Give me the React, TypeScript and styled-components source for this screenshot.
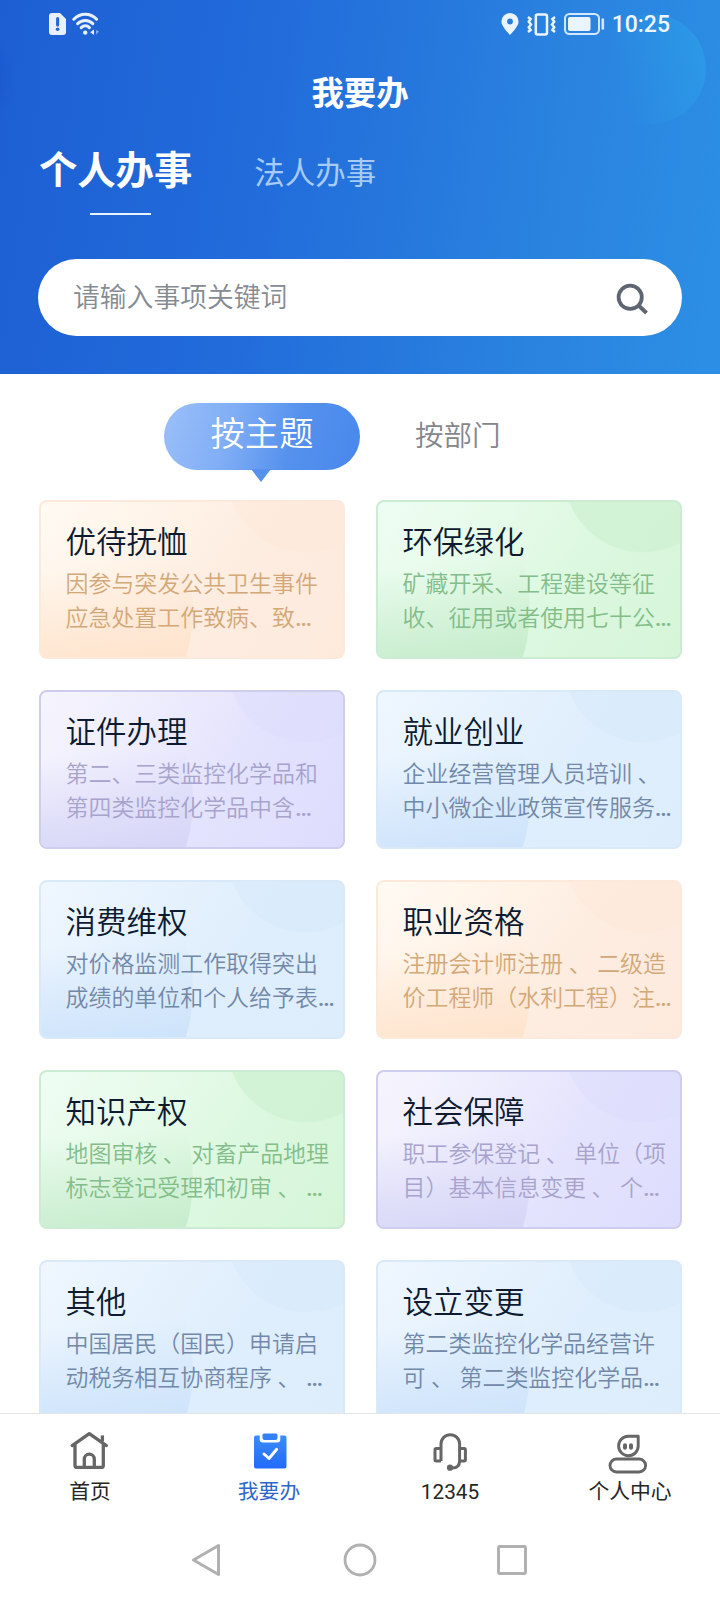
import React from 'react';
import styled, { createGlobalStyle, css } from 'styled-components';

const GlobalStyle = createGlobalStyle`
  * { box-sizing: border-box; }
  body {
    margin: 0;
    background: #fff;
    font-family: Roboto, "Noto Sans CJK SC", sans-serif;
  }
  svg { display: block; }
`;

type Tone = 'orange' | 'green' | 'purple' | 'blue';

interface Palette {
  text: string;
  border: string;
  base: string;
  circle: string;
  corner: string;
}

const palettes: Record<Tone, Palette> = {
  orange: {
    text: '#d3a878',
    border: '#fce9dc',
    base: 'linear-gradient(125deg, #fffaf3 0%, #fff4e9 30%, #fdece0 60%, #fdeadd 100%)',
    circle: '253, 231, 216',
    corner: '254, 227, 203',
  },
  green: {
    text: '#83bd8a',
    border: '#cbecd2',
    base: 'linear-gradient(125deg, #eefdf3 0%, #e7fbea 30%, #dcf8e0 60%, #d6f5d8 100%)',
    circle: '206, 241, 210',
    corner: '196, 235, 202',
  },
  purple: {
    text: '#a8a3cd',
    border: '#cfcdee',
    base: 'linear-gradient(120deg, #f6f5fd 0%, #eeedfd 30%, #e4e3fd 60%, #dddcfd 100%)',
    circle: '217, 219, 252',
    corner: '213, 212, 246',
  },
  blue: {
    text: '#7288a8',
    border: '#d9e9f8',
    base: 'linear-gradient(125deg, #eff7fe 0%, #e6f2fd 30%, #dfeefc 60%, #deedfb 100%)',
    circle: '210, 230, 249',
    corner: '204, 226, 251',
  },
};

const Screen = styled.div`
  width: 720px;
  height: 1600px;
  display: flex;
  flex-direction: column;
  overflow: hidden;
  background: #fff;
`;

const Header = styled.header`
  height: 374px;
  flex: none;
  display: flex;
  flex-direction: column;
  color: #fff;
  background:
    radial-gradient(circle 60px at -46px 78px, rgba(24, 78, 205, 0.6) 60%, rgba(24, 78, 205, 0) 100%),
    linear-gradient(98deg, #1d5fd2 0%, #216bdb 35%, #2575dc 52%, #2a83df 75%, #2c8fe5 100%);
  position: relative;

  &::before {
    content: '';
    position: absolute;
    left: 596px;
    top: 14px;
    width: 110px;
    height: 110px;
    border-radius: 50%;
    background: linear-gradient(75deg, rgba(44, 162, 232, 0) 25%, rgba(44, 162, 232, 0.65) 100%);
  }
`;

const StatusBar = styled.div`
  height: 48px;
  padding: 0 50px 0 49px;
  display: flex;
  align-items: center;
  justify-content: space-between;
  position: relative;
`;

const StatusGroup = styled.div<{ $gap: number }>`
  display: flex;
  align-items: center;
  gap: ${(p) => p.$gap}px;
`;

const Clock = styled.span`
  font-size: 23px;
  font-weight: 500;
  line-height: 28px;
  padding-top: 2px;
  margin-left: -1px;
  color: #eef6ff;
`;

const Title = styled.h1`
  margin: 0;
  height: 84px;
  font-size: 32.4px;
  line-height: 92px;
  font-weight: 700;
  text-align: center;
`;

const AudienceTabs = styled.div`
  height: 127px;
  padding: 3px 0 0 39px;
  display: flex;
  align-items: flex-start;
  gap: 62px;
`;

const AudienceTab = styled.div<{ $active?: boolean }>`
  display: flex;
  flex-direction: column;
  align-items: center;
  white-space: nowrap;
  font-size: 30.5px;
  line-height: 78px;
  color: #a5cbf6;
  ${(p) =>
    p.$active &&
    css`
      font-size: 38.3px;
      line-height: 72px;
      font-weight: 700;
      color: #fff;
      &::after {
        content: '';
        width: 61px;
        height: 2px;
        margin: 6px 0 0 9px;
        background: #e8f3ff;
      }
    `}
`;

const SearchBox = styled.div`
  margin: 0 38px;
  height: 77px;
  border-radius: 39px;
  padding: 3px 33px 0 35px;
  background: #fff;
  display: flex;
  align-items: center;
  justify-content: space-between;
`;

const Placeholder = styled.span`
  font-size: 26.8px;
  font-weight: 350;
  line-height: 40px;
  color: #858a93;
  margin-top: -3px;
`;

const Content = styled.main`
  flex: 1;
  min-height: 0;
  overflow: hidden;
`;

const ModeTabs = styled.div`
  height: 126px;
  padding: 29px 0 0 164px;
  display: flex;
  align-items: flex-start;
`;

const ModeActive = styled.div`
  position: relative;
  width: 196px;
  height: 67px;
  border-radius: 34px;
  font-size: 34.3px;
  font-weight: 350;
  line-height: 62px;
  text-align: center;
  color: #fff;
  background: linear-gradient(105deg, #97bdf9 5%, #7fadf5 35%, #5591ed 65%, #4888ec 100%);

  &::after {
    content: '';
    position: absolute;
    left: 87px;
    top: 66px;
    border: 10px solid transparent;
    border-top: 13px solid #5591ed;
    border-bottom: 0;
  }
`;

const ModeIdle = styled.div`
  margin-left: 55px;
  font-size: 28.5px;
  font-weight: 350;
  line-height: 67px;
  color: #85868c;
`;

const CardGrid = styled.div`
  padding: 0 38px 0 39px;
  display: grid;
  grid-template-columns: 306px 306px;
  grid-auto-rows: 159px;
  gap: 31px;
`;

const Card = styled.article<{ $tone: Tone }>`
  border: 2px solid ${(p) => palettes[p.$tone].border};
  border-radius: 8px;
  padding: 20px 0 0 24.5px;
  white-space: nowrap;
  color: ${(p) => palettes[p.$tone].text};
  background:
    ${(p) => {
      const { circle, base } = palettes[p.$tone];
      const strength = p.$tone === 'green' ? 0.75 : 0.38;
      return `
        radial-gradient(circle 80px at 267px -27px, rgba(${circle}, ${strength}) 0%, rgba(${circle}, ${strength}) 98%, rgba(${circle}, 0) 100%),
        ${base}`;
    }};
  background-origin: border-box;
  position: relative;
  overflow: hidden;

  &::before {
    content: '';
    position: absolute;
    left: -172px;
    top: -52px;
    width: 324px;
    height: 320px;
    border-radius: 50%;
    background: linear-gradient(
      176deg,
      rgba(${(p) => palettes[p.$tone].corner}, 0) 38%,
      rgba(${(p) => palettes[p.$tone].corner}, 0.85) 66%
    );
  }
`;

const CardTitle = styled.h2`
  position: relative;
  margin: 0;
  font-size: 30.5px;
  line-height: 42px;
  font-weight: 350;
  color: #0d1a30;
`;

const CardText = styled.p`
  position: relative;
  margin: 4px 0 0;
  font-size: 22.95px;
  font-weight: 350;
  line-height: 34px;
`;

const Ellipsis = styled.span`
  font-weight: 500;
  font-size: 24px;
  line-height: 1;
`;

const TabBar = styled.nav`
  height: 107px;
  flex: none;
  border-top: 1px solid #e3e5e8;
  background: #fff;
  display: grid;
  grid-template-columns: repeat(4, 180px);
`;

const TabItem = styled.div<{ $active?: boolean }>`
  display: flex;
  flex-direction: column;
  align-items: center;
  padding: 16px ${(p) => (p.$active ? 2 : 0)}px 0 0;
  font-size: 20.8px;
  line-height: 30px;
  color: ${(p) => (p.$active ? '#2e66c9' : '#262626')};

  svg {
    margin-bottom: 5px;
    overflow: visible;
  }
`;

const SystemNav = styled.div`
  height: 80px;
  flex: none;
  padding-left: 191px;
  display: flex;
  align-items: center;
`;

const SystemButton = styled.div<{ $gap: number }>`
  margin-right: ${(p) => p.$gap}px;
`;

const SimAlert = () => (
  <svg width="17" height="22" viewBox="0 0 17 22">
    <path d="M3 0H11L17 6V19a3 3 0 0 1-3 3H3a3 3 0 0 1-3-3V3a3 3 0 0 1 3-3Z" fill="#e9f1ff" />
    <path d="M8.6 5.5V12" stroke="#2166d6" strokeWidth="3" strokeLinecap="round" />
    <circle cx="8.6" cy="16.3" r="1.8" fill="#2166d6" />
  </svg>
);

const Wifi = () => (
  <svg width="28" height="24" viewBox="0 0 28 24" fill="none" stroke="#e9f1ff" strokeWidth="3" strokeLinecap="round">
    <path d="M1.8 7.2C8.5.6 18 .6 24.6 7.2" />
    <path d="M5.6 11.6c4.4-4.3 11-4.3 15.2 0" />
    <path d="M9.2 15.6c2.6-2.5 5.8-2.5 8.2 0" />
    <circle cx="13.2" cy="20.6" r="2.2" fill="#e9f1ff" stroke="none" />
    <path d="M22 17.5v5.600L18.200 20.300Z" fill="#e9f1ff" stroke="none" />
    <path d="M24.200 18v4.600l2.600-3Z" fill="#8eb7f0" stroke="none" />
  </svg>
);

const Pin = () => (
  <svg width="18" height="22" viewBox="0 0 18 22">
    <path
      fillRule="evenodd"
      fill="#eaf4ff"
      d="M9 0a8.6 8.6 0 0 1 8.6 8.6C17.600 14 9 22 9 22S.4 14 .4 8.600A8.600 8.600 0 0 1 9 0Zm0 5.600a2.900 2.900 0 1 0 0 5.800 2.900 2.900 0 0 0 0-5.800Z"
    />
  </svg>
);

const Vibrate = () => (
  <svg width="29" height="23" viewBox="0 0 29 23" fill="none" stroke="#eaf4ff">
    <rect x="8.800" y="1.400" width="11.200" height="20" rx="2" strokeWidth="2.500" />
    <path d="M1 4 3.600 6 1.800 8.700 4 11.500 1.800 14.300 3.600 17 1 19" strokeWidth="2.500" />
    <path d="M28 4 25.400 6l1.800 2.700L25 11.500l2.200 2.800L25.400 17l2.600 2" strokeWidth="2.500" />
  </svg>
);

const Battery = () => (
  <svg width="41" height="22" viewBox="0 0 41 22">
    <rect x="1" y="1" width="34" height="20" rx="4.500" fill="none" stroke="#d3e8ff" strokeWidth="2" />
    <rect x="4" y="4" width="22.500" height="14" rx="2" fill="#eaf4ff" />
    <path d="M38.800 6.500v9" stroke="#d3e8ff" strokeWidth="2.600" strokeLinecap="round" />
  </svg>
);

const SearchIcon = () => (
  <svg width="34" height="34" viewBox="0 0 34 34" fill="none" stroke="#5f6672" strokeWidth="3.800">
    <circle cx="15.200" cy="15.300" r="11.600" />
    <path d="M23.300 23.300 31.500 31" strokeWidth="4" />
  </svg>
);

const HomeIcon = () => (
  <svg width="42" height="42" viewBox="0 0 42 42" fill="none" stroke="#666" strokeWidth="3.300" strokeLinejoin="round" strokeLinecap="round">
    <path d="M3.200 15.600 20.300 3.600 37.400 15.600" />
    <path d="M33.400 11.500V5.400" strokeLinecap="butt" />
    <path d="M6 15v20.400q0 2 2 2h24.300q2 0 2-2V15" />
    <path d="M15.300 37V29.200a5 5 0 0 1 10 0V37" />
  </svg>
);

const TaskIcon = () => (
  <svg width="42" height="42" viewBox="0 0 42 42">
    <defs>
      <linearGradient id="task" x1="0" y1="0" x2="0" y2="1">
        <stop offset="0" stopColor="#3b8cfb" />
        <stop offset="1" stopColor="#226afa" />
      </linearGradient>
    </defs>
    <path d="M8 5.500h3.700v4q0 3 3 3h14.600q3 0 3-3v-4H36.500q2 0 2 2V36.500q0 2-2 2H8q-2 0-2-2V7.500q0-2 2-2Z" fill="url(#task)" />
    <path d="M16 3.500h12q1.500 0 1.500 1.500V8q0 2-2 2H16.500q-2 0-2-2V5q0-1.500 1.500-1.500Z" fill="#3380f4" />
    <path d="m16 24 5 4.500 7.700-9.200" fill="none" stroke="#fff" strokeWidth="2.900" strokeLinecap="round" strokeLinejoin="round" />
  </svg>
);

const HeadsetIcon = () => (
  <svg width="42" height="42" viewBox="0 0 42 42" fill="none" stroke="#666" strokeWidth="3" strokeLinejoin="round">
    <path d="M12 31V14a9.300 9.300 0 0 1 18.600 0V31c0 4.500-2.500 7-7.500 7" />
    <path d="M12 18.500H7.200q-1.200 0-1.200 1.200v10.100q0 1.200 1.200 1.200H12" />
    <path d="M30.600 18.500H35.200q1.200 0 1.200 1.200v10.100q0 1.200-1.200 1.200h-4.600" />
    <circle cx="21" cy="37.700" r="3.100" fill="#666" stroke="none" />
  </svg>
);

const ProfileIcon = () => (
  <svg width="42" height="42" viewBox="0 0 42 42" fill="none" stroke="#666" strokeWidth="2.900">
    <path d="M29.200 6.200H19a9.800 9.800 0 1 0 10.200 9.800Z" strokeLinejoin="round" />
    <path d="M16 15.200v2.600M22 15.200v2.600" strokeWidth="4" strokeLinecap="round" />
    <rect x="1" y="29" width="35.600" height="13" rx="6.500" />
  </svg>
);

const services: { title: string; tone: Tone; lines: [string, string]; cut?: boolean }[] = [
  { title: '优待抚恤', tone: 'orange', cut: true, lines: ['因参与突发公共卫生事件', '应急处置工作致病、致'] },
  { title: '环保绿化', tone: 'green', cut: true, lines: ['矿藏开采、工程建设等征', '收、征用或者使用七十公'] },
  { title: '证件办理', tone: 'purple', cut: true, lines: ['第二、三类监控化学品和', '第四类监控化学品中含'] },
  { title: '就业创业', tone: 'blue', cut: true, lines: ['企业经营管理人员培训 、', '中小微企业政策宣传服务'] },
  { title: '消费维权', tone: 'blue', cut: true, lines: ['对价格监测工作取得突出', '成绩的单位和个人给予表'] },
  { title: '职业资格', tone: 'orange', cut: true, lines: ['注册会计师注册 、 二级造', '价工程师（水利工程）注'] },
  { title: '知识产权', tone: 'green', cut: true, lines: ['地图审核 、 对畜产品地理', '标志登记受理和初审 、 '] },
  { title: '社会保障', tone: 'purple', cut: true, lines: ['职工参保登记 、 单位（项', '目）基本信息变更 、 个'] },
  { title: '其他', tone: 'blue', cut: true, lines: ['中国居民（国民）申请启', '动税务相互协商程序 、 '] },
  { title: '设立变更', tone: 'blue', cut: true, lines: ['第二类监控化学品经营许', '可 、 第二类监控化学品'] },
];

export default function App() {
  return (
    <Screen lang="zh-CN">
      <GlobalStyle />
      <Header>
        <StatusBar>
          <StatusGroup $gap={6}>
            <SimAlert />
            <Wifi />
          </StatusGroup>
          <StatusGroup $gap={8}>
            <Pin />
            <Vibrate />
            <Battery />
            <Clock>10:25</Clock>
          </StatusGroup>
        </StatusBar>
        <Title>我要办</Title>
        <AudienceTabs>
          <AudienceTab $active>个人办事</AudienceTab>
          <AudienceTab>法人办事</AudienceTab>
        </AudienceTabs>
        <SearchBox>
          <Placeholder>请输入事项关键词</Placeholder>
          <SearchIcon />
        </SearchBox>
      </Header>
      <Content>
        <ModeTabs>
          <ModeActive>按主题</ModeActive>
          <ModeIdle>按部门</ModeIdle>
        </ModeTabs>
        <CardGrid>
          {services.map((s) => (
            <Card key={s.title} $tone={s.tone}>
              <CardTitle>{s.title}</CardTitle>
              <CardText>
                {s.lines[0]}
                <br />
                {s.lines[1]}
                {s.cut && <Ellipsis>…</Ellipsis>}
              </CardText>
            </Card>
          ))}
        </CardGrid>
      </Content>
      <TabBar>
        <TabItem>
          <HomeIcon />
          首页
        </TabItem>
        <TabItem $active>
          <TaskIcon />
          我要办
        </TabItem>
        <TabItem>
          <HeadsetIcon />
          12345
        </TabItem>
        <TabItem>
          <ProfileIcon />
          个人中心
        </TabItem>
      </TabBar>
      <SystemNav>
        <SystemButton $gap={122}>
          <svg width="30" height="34" viewBox="0 0 30 34">
            <path d="M27.500 2.500v29L2.500 17Z" fill="none" stroke="#b0b0b0" strokeWidth="3" strokeLinejoin="round" />
          </svg>
        </SystemButton>
        <SystemButton $gap={120}>
          <svg width="34" height="34" viewBox="0 0 34 34">
            <circle cx="17" cy="17" r="15" fill="none" stroke="#b0b0b0" strokeWidth="2.800" />
          </svg>
        </SystemButton>
        <SystemButton $gap={0}>
          <svg width="30" height="30" viewBox="0 0 30 30">
            <rect x="1.500" y="1.500" width="27" height="27" rx="1" fill="none" stroke="#b0b0b0" strokeWidth="2.900" />
          </svg>
        </SystemButton>
      </SystemNav>
    </Screen>
  );
}
